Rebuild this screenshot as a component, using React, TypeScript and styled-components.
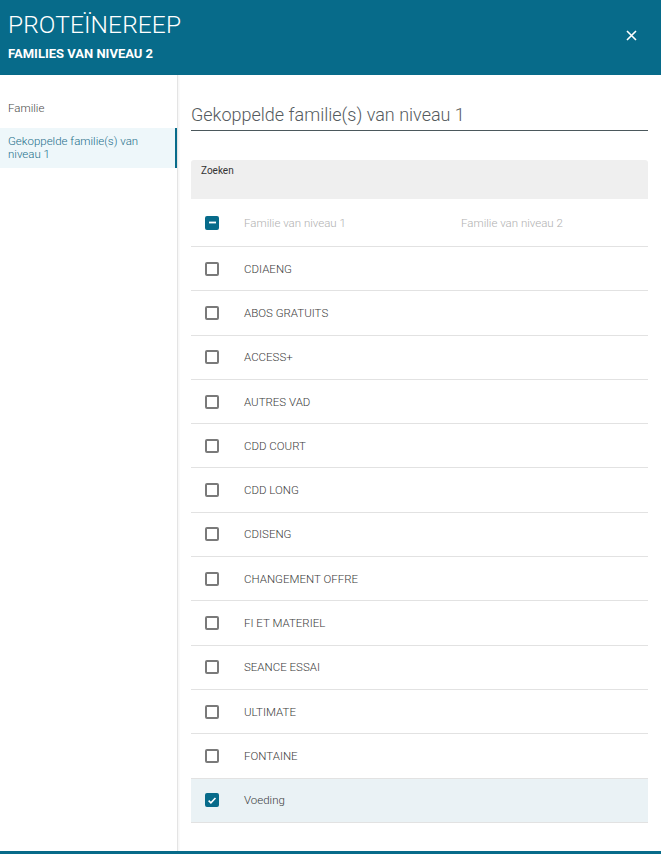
import styled, { createGlobalStyle } from "styled-components";

const GlobalStyle = createGlobalStyle`
    html, body {
        margin: 0;
        padding: 0;
        background: #ffffff;
    }

    body {
        font-family: Roboto, "Liberation Sans", sans-serif;
    }
`

const PaginaStyled = styled.div`
    display: flex;
    flex-direction: column;
    height: 854px;
    border-bottom: 3px solid #076b8a;
    box-sizing: border-box;
`

const CabecalhoStyled = styled.header`
    display: flex;
    justify-content: space-between;
    align-items: center;
    height: 75px;
    flex-shrink: 0;
    padding: 0 24px 4px 8px;
    box-sizing: border-box;
    background: #076b8a;
    color: #ffffff;
`

const TituloCabecalho = styled.h1`
    margin: 0 0 8px 0;
    font-weight: 300;
    font-size: 24.5px;
    line-height: 28px;
    letter-spacing: 0.1px;
`

const SubtituloCabecalho = styled.h2`
    margin: 0;
    font-weight: 700;
    font-size: 13px;
    line-height: 14px;
`

const BotaoFechar = styled.button`
    display: flex;
    padding: 0;
    border: none;
    background: none;
    cursor: pointer;
`

const CorpoStyled = styled.div`
    display: flex;
    flex: 1;
    min-height: 0;
`

const MenuLateral = styled.nav`
    width: 177px;
    flex-shrink: 0;
    padding-top: 20px;
    display: flex;
    flex-direction: column;
    gap: 6px;
    border-right: 1px solid #e4e4e4;
    box-shadow: 1px 0 2px rgba(0, 0, 0, 0.05);
`

const ItemMenu = styled.a<{ $ativo?: boolean }>`
    display: block;
    padding: 7px 8px;
    font-size: 11.5px;
    font-weight: 300;
    line-height: 13px;
    color: ${({ $ativo }) => ($ativo ? "#1d6f8a" : "#4a4a4a")};
    background: ${({ $ativo }) => ($ativo ? "#eef7fa" : "transparent")};
    border-right: 2px solid ${({ $ativo }) => ($ativo ? "#076b8a" : "transparent")};
    text-decoration: none;
`

const ConteudoStyled = styled.main`
    flex: 1;
    padding: 0 13px 0 13px;
    display: flex;
    flex-direction: column;
`

const TituloSecao = styled.h3`
    margin: 28px 0 0 0;
    padding-bottom: 3px;
    font-weight: 300;
    font-size: 18px;
    line-height: 24px;
    color: #555b5e;
    border-bottom: 1px solid #4b585c;
`

const CaixaBusca = styled.div`
    margin-top: 29px;
    height: 39px;
    padding: 4px 10px;
    box-sizing: border-box;
    background: #efefef;
    border-radius: 3px 3px 0 0;
    font-size: 10px;
    line-height: 13px;
    color: #333333;
`

const Tabela = styled.div`
    display: flex;
    flex-direction: column;
`

const LinhaTabela = styled.div<{ $cabecalho?: boolean; $marcada?: boolean }>`
    display: grid;
    grid-template-columns: 39px 217px 1fr;
    align-items: center;
    height: ${({ $cabecalho }) => ($cabecalho ? "48px" : "44.3px")};
    box-sizing: border-box;
    padding-left: 14px;
    border-bottom: 1px solid #e2e2e2;
    background: ${({ $marcada }) => ($marcada ? "#eaf2f5" : "transparent")};
    font-size: 11.5px;
    font-weight: 300;
    color: ${({ $cabecalho }) => ($cabecalho ? "#b0b0b0" : "#3c3c3c")};
`

const CaixaMarcar = styled.span<{ $cheia?: boolean }>`
    display: flex;
    align-items: center;
    justify-content: center;
    width: 14px;
    height: 14px;
    box-sizing: border-box;
    border-radius: 2px;
    border: 2px solid ${({ $cheia }) => ($cheia ? "#076b8a" : "#7a7a7a")};
    background: ${({ $cheia }) => ($cheia ? "#076b8a" : "#ffffff")};
`

type EstadoMarcar = "vazio" | "parcial" | "marcado";

function Marcador({ estado }: { estado: EstadoMarcar }) {
    return (
        <CaixaMarcar $cheia={estado !== "vazio"}>
            {estado === "parcial" && (
                <svg width="9" height="9" viewBox="0 0 9 9">
                    <rect x="1" y="3.6" width="7" height="1.8" fill="#ffffff" />
                </svg>
            )}
            {estado === "marcado" && (
                <svg width="11" height="11" viewBox="0 0 11 11">
                    <path d="M1.8 5.6 L4.3 8 L9.3 2.8" fill="none" stroke="#ffffff" strokeWidth="1.8" />
                </svg>
            )}
        </CaixaMarcar>
    )
}

const familias = [
    "CDIAENG",
    "ABOS GRATUITS",
    "ACCESS+",
    "AUTRES VAD",
    "CDD COURT",
    "CDD LONG",
    "CDISENG",
    "CHANGEMENT OFFRE",
    "FI ET MATERIEL",
    "SEANCE ESSAI",
    "ULTIMATE",
    "FONTAINE",
    "Voeding",
];

const selecionadas = ["Voeding"];

function App() {
    return (
        <PaginaStyled>
            <GlobalStyle />
            <CabecalhoStyled>
                <div>
                    <TituloCabecalho>PROTEÏNEREEP</TituloCabecalho>
                    <SubtituloCabecalho>FAMILIES VAN NIVEAU 2</SubtituloCabecalho>
                </div>
                <BotaoFechar aria-label="Sluiten">
                    <svg width="11" height="11" viewBox="0 0 11 11">
                        <path d="M1 1 L10 10 M10 1 L1 10" stroke="#ffffff" strokeWidth="1.6" />
                    </svg>
                </BotaoFechar>
            </CabecalhoStyled>

            <CorpoStyled>
                <MenuLateral>
                    <ItemMenu href="#">Familie</ItemMenu>
                    <ItemMenu href="#" $ativo>Gekoppelde familie(s) van niveau 1</ItemMenu>
                </MenuLateral>

                <ConteudoStyled>
                    <TituloSecao>Gekoppelde familie(s) van niveau 1</TituloSecao>
                    <CaixaBusca>Zoeken</CaixaBusca>
                    <Tabela>
                        <LinhaTabela $cabecalho>
                            <Marcador estado="parcial" />
                            <span>Familie van niveau 1</span>
                            <span>Familie van niveau 2</span>
                        </LinhaTabela>
                        {familias.map((nome) => {
                            const marcada = selecionadas.includes(nome);
                            return (
                                <LinhaTabela key={nome} $marcada={marcada}>
                                    <Marcador estado={marcada ? "marcado" : "vazio"} />
                                    <span>{nome}</span>
                                    <span></span>
                                </LinhaTabela>
                            )
                        })}
                    </Tabela>
                </ConteudoStyled>
            </CorpoStyled>
        </PaginaStyled>
    )
}

export default App;
